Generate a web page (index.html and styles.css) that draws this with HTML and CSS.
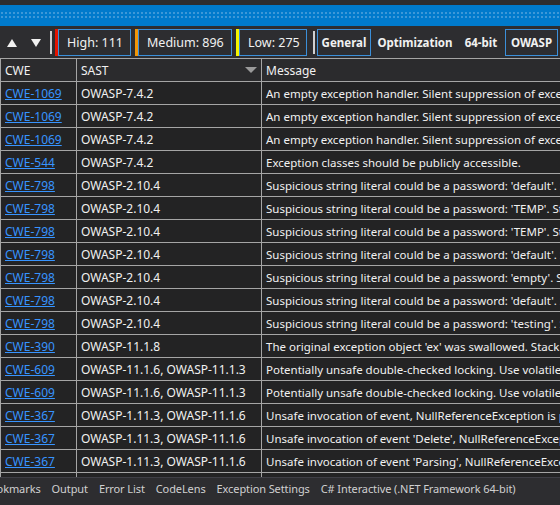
FILE: index.html
```html
<html>

<head>
    <title>Error List - OWASP</title>
    <link rel="stylesheet" href="styles.css">
</head>

<body>
    <div class="window">
        <div class="top-strip"></div>
        <div class="title-bar">
            <div class="grip"></div>
        </div>

        <div class="toolbar">
            <span class="arrow up">
                <svg width="10" height="8" viewBox="0 0 10 8"><polygon points="5,0 10,8 0,8" fill="#f1f1f1" /></svg>
            </span>
            <span class="arrow down">
                <svg width="10" height="8" viewBox="0 0 10 8"><polygon points="0,0 10,0 5,8" fill="#f1f1f1" /></svg>
            </span>
            <span class="sep first"></span>

            <span class="level high"></span>
            <span class="chip w-high">High: 111</span>
            <span class="level medium"></span>
            <span class="chip w-medium">Medium: 896</span>
            <span class="level low"></span>
            <span class="chip w-low">Low: 275</span>

            <span class="sep second"></span>

            <span class="filter active w-general">General</span>
            <span class="filter w-opt">Optimization</span>
            <span class="filter w-64">64-bit</span>
            <span class="filter active w-owasp">OWASP</span>
        </div>

        <div class="grid-wrap">
            <table id="issues">
                <colgroup>
                    <col class="c-cwe">
                    <col class="c-sast">
                    <col class="c-msg">
                </colgroup>
                <thead>
                    <tr>
                        <th>CWE</th>
                        <th>SAST
                            <svg class="sort" width="12" height="6" viewBox="0 0 12 6"><polygon points="0,0 12,0 6,6" fill="#9a9a9a" /></svg>
                        </th>
                        <th>Message</th>
                    </tr>
                </thead>
                <tbody>
                    <tr>
                        <td><a href="#">CWE-1069 </a></td>
                        <td>OWASP-7.4.2</td>
                        <td>An empty exception handler. Silent suppression of exceptions can mask errors.</td>
                    </tr>
                    <tr>
                        <td><a href="#">CWE-1069 </a></td>
                        <td>OWASP-7.4.2</td>
                        <td>An empty exception handler. Silent suppression of exceptions can mask errors.</td>
                    </tr>
                    <tr>
                        <td><a href="#">CWE-1069 </a></td>
                        <td>OWASP-7.4.2</td>
                        <td>An empty exception handler. Silent suppression of exceptions can mask errors.</td>
                    </tr>
                    <tr>
                        <td><a href="#">CWE-544 </a></td>
                        <td>OWASP-7.4.2</td>
                        <td>Exception classes should be publicly accessible.</td>
                    </tr>
                    <tr>
                        <td><a href="#">CWE-798 </a></td>
                        <td>OWASP-2.10.4</td>
                        <td>Suspicious string literal could be a password: 'default'. Storing credentials</td>
                    </tr>
                    <tr>
                        <td><a href="#">CWE-798 </a></td>
                        <td>OWASP-2.10.4</td>
                        <td>Suspicious string literal could be a password: 'TEMP'. Storing credentials</td>
                    </tr>
                    <tr>
                        <td><a href="#">CWE-798 </a></td>
                        <td>OWASP-2.10.4</td>
                        <td>Suspicious string literal could be a password: 'TEMP'. Storing credentials</td>
                    </tr>
                    <tr>
                        <td><a href="#">CWE-798 </a></td>
                        <td>OWASP-2.10.4</td>
                        <td>Suspicious string literal could be a password: 'default'. Storing credentials</td>
                    </tr>
                    <tr>
                        <td><a href="#">CWE-798 </a></td>
                        <td>OWASP-2.10.4</td>
                        <td>Suspicious string literal could be a password: 'empty'. Storing credentials</td>
                    </tr>
                    <tr>
                        <td><a href="#">CWE-798 </a></td>
                        <td>OWASP-2.10.4</td>
                        <td>Suspicious string literal could be a password: 'default'. Storing credentials</td>
                    </tr>
                    <tr>
                        <td><a href="#">CWE-798 </a></td>
                        <td>OWASP-2.10.4</td>
                        <td>Suspicious string literal could be a password: 'testing'. Storing credentials</td>
                    </tr>
                    <tr>
                        <td><a href="#">CWE-390 </a></td>
                        <td>OWASP-11.1.8</td>
                        <td>The original exception object 'ex' was swallowed. Stack trace can be lost.</td>
                    </tr>
                    <tr>
                        <td><a href="#">CWE-609 </a></td>
                        <td>OWASP-11.1.6, OWASP-11.1.3</td>
                        <td>Potentially unsafe double-checked locking. Use volatile variable</td>
                    </tr>
                    <tr>
                        <td><a href="#">CWE-609 </a></td>
                        <td>OWASP-11.1.6, OWASP-11.1.3</td>
                        <td>Potentially unsafe double-checked locking. Use volatile variable</td>
                    </tr>
                    <tr>
                        <td><a href="#">CWE-367 </a></td>
                        <td>OWASP-1.11.3, OWASP-11.1.6</td>
                        <td>Unsafe invocation of event, NullReferenceException is possible.</td>
                    </tr>
                    <tr>
                        <td><a href="#">CWE-367 </a></td>
                        <td>OWASP-1.11.3, OWASP-11.1.6</td>
                        <td>Unsafe invocation of event 'Delete', NullReferenceException is possible.</td>
                    </tr>
                    <tr>
                        <td><a href="#">CWE-367 </a></td>
                        <td>OWASP-1.11.3, OWASP-11.1.6</td>
                        <td>Unsafe invocation of event 'Parsing', NullReferenceException is possible.</td>
                    </tr>
                    <tr>
                        <td></td>
                        <td></td>
                        <td></td>
                    </tr>
                </tbody>
            </table>
        </div>

        <div class="tabs">
            <span class="tab t-book">Bookmarks</span>
            <span class="tab">Output</span>
            <span class="tab">Error List</span>
            <span class="tab">CodeLens</span>
            <span class="tab">Exception Settings</span>
            <span class="tab">C# Interactive (.NET Framework 64-bit)</span>
        </div>
    </div>
</body>

</html>
```

FILE: styles.css
```css
body {
    margin: 0;
    background-color: #2d2d30;
    font-family: "Noto Sans", "Open Sans", Arial, sans-serif;
    color: #f1f1f1;
}

.window {
    width: 560px;
    height: 505px;
    display: flex;
    flex-direction: column;
    overflow: hidden;
}

.top-strip {
    height: 5px;
    background-color: #2d2d30;
}

.title-bar {
    height: 21px;
    background-color: #007acc;
    padding-top: 6px;
    box-sizing: border-box;
}

.grip {
    height: 8px;
    background-image: radial-gradient(circle, #3d98d8 0.9px, transparent 1.1px);
    background-size: 4px 4px;
}

/* toolbar */

.toolbar {
    height: 32px;
    display: flex;
    align-items: flex-start;
    padding-top: 3px;
    box-sizing: border-box;
    background-color: #2d2d30;
    white-space: nowrap;
}

.arrow {
    display: flex;
    align-items: center;
    height: 27px;
}

.arrow.up {
    margin-left: 7px;
}

.arrow.down {
    margin-left: 14px;
}

.sep {
    width: 2px;
    height: 23px;
    margin-top: 2px;
    background-color: #d0d0d0;
}

.sep.first {
    margin-left: 9px;
    margin-right: 3px;
}

.sep.second {
    margin-left: 6px;
    margin-right: 2px;
}

.level {
    width: 3px;
    height: 27px;
}

.level.high {
    background-color: #e51400;
}

.level.medium {
    background-color: #f09609;
    margin-left: 4px;
}

.level.low {
    background-color: #f5f500;
    margin-left: 4px;
}

.chip {
    height: 27px;
    line-height: 25px;
    box-sizing: border-box;
    border: 1px solid #3b8fd9;
    padding-left: 8px;
    font-size: 12.5px;
}

.w-high {
    width: 73px;
}

.w-medium {
    width: 94px;
}

.w-low {
    width: 68px;
}

.filter {
    height: 27px;
    line-height: 25px;
    box-sizing: border-box;
    border: 1px solid transparent;
    text-align: center;
    font-size: 11.5px;
    font-weight: bold;
    margin-right: 2px;
}

.filter.active {
    border-color: #3b8fd9;
}

.w-general {
    width: 54px;
}

.w-opt {
    width: 84px;
}

.w-64 {
    width: 44px;
}

.w-owasp {
    width: 53px;
}

/* issues grid */

.grid-wrap {
    flex: 1;
    overflow: hidden;
    background-color: #252526;
}

#issues {
    table-layout: fixed;
    width: 720px;
    border-collapse: collapse;
    font-size: 12px;
    white-space: nowrap;
}

.c-cwe {
    width: 76px;
}

.c-sast {
    width: 185px;
}

#issues th,
#issues td {
    border: 1px solid #a5a5a5;
    padding: 2px 4px 0 4px;
    height: 20px;
    line-height: 20px;
    text-align: left;
    overflow: hidden;
    font-weight: normal;
}

#issues td:nth-child(3) {
    font-size: 11.5px;
}

#issues th {
    background-color: #2b2b2d;
    position: relative;
}

#issues td {
    background-color: #232324;
}

#issues a {
    color: #3794ff;
    text-decoration: underline;
}

.sort {
    position: absolute;
    right: 4px;
    top: 8px;
}

/* bottom tabs */

.tabs {
    height: 28px;
    display: flex;
    align-items: center;
    gap: 11px;
    padding-bottom: 6px;
    background-color: #2d2d30;
    font-size: 11px;
    letter-spacing: -0.1px;
    color: #d0d0d0;
    white-space: nowrap;
    border-top: 1px solid #3f3f46;
    box-sizing: border-box;
}

.tab {
    flex: none;
}

.t-book {
    margin-left: -17px;
}
```
